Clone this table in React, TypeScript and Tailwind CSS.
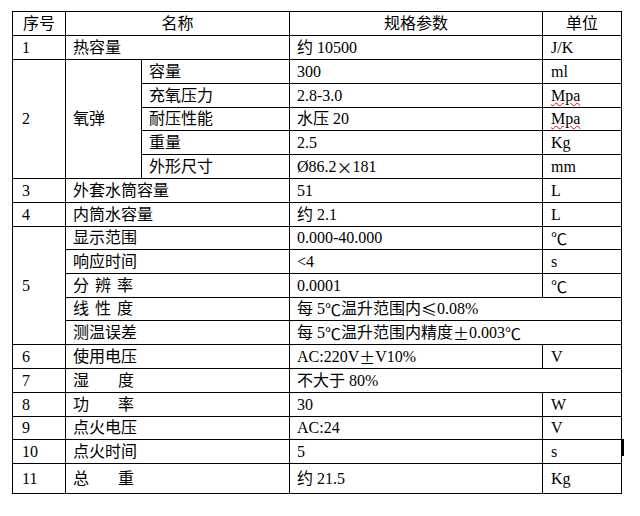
import React from "react";

function C({ children, className = "" }: { children?: React.ReactNode; className?: string }) {
  return (
    <div className={"flex items-center whitespace-nowrap border-r border-b border-black " + className}>
      {children}
    </div>
  );
}

function K({ children }: { children: React.ReactNode }) {
  return <span className="font-['Noto_Sans_CJK_SC',sans-serif]">{children}</span>;
}

function Mpa() {
  return (
    <span className="underline decoration-wavy decoration-[#ff0000] decoration-1 underline-offset-[1px]">Mpa</span>
  );
}

function Wide({ a, b }: { a: string; b: string }) {
  return (
    <span className="inline-flex gap-[29px]">
      <span>{a}</span>
      <span>{b}</span>
    </span>
  );
}

function Spaced({ t }: { t: string[] }) {
  return (
    <span className="inline-flex gap-[6px]">
      {t.map((c, i) => (
        <span key={i}>{c}</span>
      ))}
    </span>
  );
}

export default function App() {
  const no = "pl-[9px]";
  const nm = "pl-[7px]";
  const val = "pl-[7px]";
  const unit = "pl-[8px]";
  return (
    <div className="relative h-[516px] w-[640px] overflow-hidden bg-white pt-[11px] pl-[12px] font-['Liberation_Serif','Noto_Sans_CJK_SC',serif] text-[16px] leading-none text-black">
      <div className="grid w-[610px] grid-cols-[53px_76px_148px_253px_79px] grid-rows-[24px_24px_24px_24px_23px_24px_24px_24px_24px_23px_24px_24px_23px_24px_24px_24px_24px_23px_24px_30px] border-l border-t border-black">
        {/* header */}
        <C className="justify-center">序号</C>
        <C className="col-span-2 justify-center">名称</C>
        <C className="justify-center">规格参数</C>
        <C className="justify-center">单位</C>

        {/* 1 */}
        <C className={no}>1</C>
        <C className={"col-span-2 " + nm}>热容量</C>
        <C className={val}>约 10500</C>
        <C className={unit}>J/K</C>

        {/* 2 */}
        <C className={"row-span-5 " + no}>2</C>
        <C className={"row-span-5 " + nm}>氧弹</C>
        <C className={nm}>容量</C>
        <C className={val}>300</C>
        <C className={unit}>ml</C>

        <C className={nm}>充氧压力</C>
        <C className={val}>2.8-3.0</C>
        <C className={unit}>
          <Mpa />
        </C>

        <C className={nm}>耐压性能</C>
        <C className={val}>水压 20</C>
        <C className={unit}>
          <Mpa />
        </C>

        <C className={nm}>重量</C>
        <C className={val}>2.5</C>
        <C className={unit}>Kg</C>

        <C className={nm}>外形尺寸</C>
        <C className={val}>
          Ø86.2<K>×</K>181
        </C>
        <C className={unit}>mm</C>

        {/* 3 */}
        <C className={no}>3</C>
        <C className={"col-span-2 " + nm}>外套水筒容量</C>
        <C className={val}>51</C>
        <C className={unit}>L</C>

        {/* 4 */}
        <C className={no}>4</C>
        <C className={"col-span-2 " + nm}>内筒水容量</C>
        <C className={val}>约 2.1</C>
        <C className={unit}>L</C>

        {/* 5 */}
        <C className={"row-span-5 " + no}>5</C>
        <C className={"col-span-2 " + nm}>显示范围</C>
        <C className={val}>0.000-40.000</C>
        <C className={unit}>
          <K>℃</K>
        </C>

        <C className={"col-span-2 " + nm}>响应时间</C>
        <C className={val}>&lt;4</C>
        <C className={unit}>s</C>

        <C className={"col-span-2 " + nm}>
          <Spaced t={["分", "辨", "率"]} />
        </C>
        <C className={val}>0.0001</C>
        <C className={unit}>
          <K>℃</K>
        </C>

        <C className={"col-span-2 " + nm}>
          <Spaced t={["线", "性", "度"]} />
        </C>
        <C className={"col-span-2 " + val}>
          每 5<K>℃</K>温升范围内<K>≤</K>0.08%
        </C>

        <C className={"col-span-2 " + nm}>测温误差</C>
        <C className={"col-span-2 " + val}>
          每 5<K>℃</K>温升范围内精度<K>±</K>0.003<K>℃</K>
        </C>

        {/* 6 */}
        <C className={no}>6</C>
        <C className={"col-span-2 " + nm}>使用电压</C>
        <C className={val}>
          AC:220V<K>±</K>V10%
        </C>
        <C className={unit}>V</C>

        {/* 7 */}
        <C className={no}>7</C>
        <C className={"col-span-2 " + nm}>
          <Wide a="湿" b="度" />
        </C>
        <C className={"col-span-2 " + val}>不大于 80%</C>

        {/* 8 */}
        <C className={no}>8</C>
        <C className={"col-span-2 " + nm}>
          <Wide a="功" b="率" />
        </C>
        <C className={val}>30</C>
        <C className={unit}>W</C>

        {/* 9 */}
        <C className={no}>9</C>
        <C className={"col-span-2 " + nm}>点火电压</C>
        <C className={val}>AC:24</C>
        <C className={unit}>V</C>

        {/* 10 */}
        <C className={no}>10</C>
        <C className={"col-span-2 " + nm}>点火时间</C>
        <C className={val}>5</C>
        <C className={unit}>s</C>

        {/* 11 */}
        <C className={no}>11</C>
        <C className={"col-span-2 " + nm}>
          <Wide a="总" b="重" />
        </C>
        <C className={val}>约 21.5</C>
        <C className={unit}>Kg</C>
      </div>
      <div className="absolute left-[622px] top-[439px] h-[17px] w-[2px] bg-black" />
    </div>
  );
}
